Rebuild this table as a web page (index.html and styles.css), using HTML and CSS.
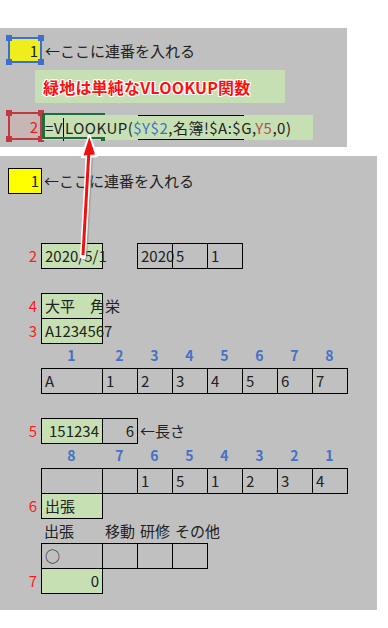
FILE: index.html
```html
<!DOCTYPE html>
<html lang="ja">
<head>
<meta charset="utf-8">
<link rel="stylesheet" href="styles.css">
</head>
<body>
<div class="top">
  <div class="trow r1">
    <div class="sel sel-blue"><span>1</span><i class="h tl"></i><i class="h tr"></i><i class="h bl"></i><i class="h br"></i></div>
    <span class="note">←ここに連番を入れる</span>
  </div>
  <div class="banner">緑地は単純なVLOOKUP関数</div>
  <div class="trow r2">
    <div class="sel sel-red"><span>2</span><i class="h tl"></i><i class="h tr"></i><i class="h bl"></i><i class="h br"></i></div>
    <div class="formula">=V<i class="caret"></i>LOOKUP(<span class="fb">$Y$2</span>,名簿!$A:$G,<span class="fr">Y5</span>,0)<i class="edit"></i><i class="knob"></i><i class="range"></i></div>
  </div>
</div>

<div class="sheet">
  <div class="row">
    <div class="lab"><div class="ycell">1</div></div>
    <span class="note">←ここに連番を入れる</span>
  </div>
  <div class="row"></div>
  <div class="row"></div>
  <div class="row">
    <div class="lab">2</div>
    <div class="c w g r">2020/5/1</div><div class="e"></div>
    <div class="c">2020</div><div class="c">5</div><div class="c">1</div>
  </div>
  <div class="row"></div>
  <div class="row">
    <div class="lab">4</div>
    <div class="c w g">大平　角栄</div>
  </div>
  <div class="row">
    <div class="lab">3</div>
    <div class="c w g">A1234567</div>
  </div>
  <div class="row">
    <div class="lab"></div>
    <div class="hn w">1</div><div class="hn">2</div><div class="hn">3</div><div class="hn">4</div><div class="hn">5</div><div class="hn">6</div><div class="hn">7</div><div class="hn">8</div>
  </div>
  <div class="row">
    <div class="lab"></div>
    <div class="c w">A</div><div class="c">1</div><div class="c">2</div><div class="c">3</div><div class="c">4</div><div class="c">5</div><div class="c">6</div><div class="c">7</div>
  </div>
  <div class="row"></div>
  <div class="row">
    <div class="lab">5</div>
    <div class="c w g r">151234</div><div class="c r">6</div>
    <span class="note">←長さ</span>
  </div>
  <div class="row">
    <div class="lab"></div>
    <div class="hn w">8</div><div class="hn">7</div><div class="hn">6</div><div class="hn">5</div><div class="hn">4</div><div class="hn">3</div><div class="hn">2</div><div class="hn">1</div>
  </div>
  <div class="row">
    <div class="lab"></div>
    <div class="c w"></div><div class="c"></div><div class="c">1</div><div class="c">5</div><div class="c">1</div><div class="c">2</div><div class="c">3</div><div class="c">4</div>
  </div>
  <div class="row">
    <div class="lab">6</div>
    <div class="c w g">出張</div>
  </div>
  <div class="row">
    <div class="lab"></div>
    <div class="t w">出張</div><div class="t">移動</div><div class="t">研修</div><div class="t">その他</div>
  </div>
  <div class="row">
    <div class="lab"></div>
    <div class="c w">○</div><div class="c"></div><div class="c"></div><div class="c"></div>
  </div>
  <div class="row">
    <div class="lab">7</div>
    <div class="c w g r">0</div>
  </div>
</div>

<svg class="arrow" width="388" height="628" viewBox="0 0 388 628">
  <line x1="84.5" y1="257" x2="90.5" y2="152" stroke="#8a8a8a" stroke-width="6" stroke-linecap="round" opacity="0.5"/>
  <line x1="83" y1="256" x2="89" y2="150" stroke="#fff" stroke-width="6" stroke-linecap="round"/>
  <polygon points="89.3,135.5 82,157 96.5,156" fill="#fff" stroke="#fff" stroke-width="2.5" stroke-linejoin="round"/>
  <line x1="83" y1="255" x2="89" y2="150" stroke="#ee1111" stroke-width="3"/>
  <polygon points="89.3,137 83.5,155.5 95,154.5" fill="#ee1111"/>
</svg>
</body>
</html>
```
FILE: styles.css
```css
html, body {
  margin: 0;
  padding: 0;
  background: #fff;
}
body {
  width: 388px;
  height: 628px;
  position: relative;
  font-family: "Noto Sans CJK JP", "Noto Sans", sans-serif;
  font-size: 15px;
  color: #222;
}
.top {
  margin-top: 28px;
  width: 347px;
  height: 119px;
  box-sizing: border-box;
  padding-top: 9px;
  background: #c0c0c0;
}
.trow {
  display: flex;
  align-items: center;
}
.r1 { height: 26px; }
.r2 {
  margin-top: 9px;
  height: 28px;
  align-items: flex-end;
}
.sel {
  position: relative;
  box-sizing: border-box;
  margin-left: 8px;
  width: 34px;
  height: 26px;
  border: 2px solid #3d6fce;
  background: #eeee1e;
  display: flex;
  align-items: center;
  justify-content: flex-end;
  padding-right: 2px;
  line-height: 1;
}
.sel-red {
  height: 28px;
  border-color: #c0393e;
  background: #c8b6b6;
  color: #e02020;
}
.h {
  position: absolute;
  width: 6px;
  height: 6px;
  background: #3d6fce;
}
.sel-red .h { background: #c0393e; }
.tl { top: -4px; left: -4px; }
.tr { top: -4px; right: -4px; }
.bl { bottom: -4px; left: -4px; }
.br { bottom: -4px; right: -4px; }
.note {
  padding-left: 3px;
  white-space: nowrap;
}
.banner {
  margin: 7px 0 0 35px;
  width: 250px;
  height: 33px;
  background: #c6e0b4;
  box-sizing: border-box;
  padding-left: 8px;
  display: flex;
  align-items: center;
  font-weight: bold;
  font-size: 16px;
  letter-spacing: 0.2px;
  color: #ff1010;
  text-shadow: 1px 0 0 #fff, -1px 0 0 #fff, 0 1px 0 #fff, 0 -1px 0 #fff, 1px 1px 0 #fff, -1px -1px 0 #fff, 1px -1px 0 #fff, -1px 1px 0 #fff;
}
.formula {
  position: relative;
  width: 271px;
  height: 25px;
  background: #c6e0b4;
  box-sizing: border-box;
  padding-left: 3px;
  line-height: 25px;
  letter-spacing: 0.5px;
  white-space: nowrap;
}
.fb { color: #4070c4; }
.fr { color: #b8504a; }
.edit {
  position: absolute;
  left: 0;
  top: -2px;
  width: 63px;
  height: 26px;
  box-sizing: border-box;
  border: 2px solid #1f6b3d;
  border-left-width: 3px;
  border-right: none;
}
.knob {
  position: absolute;
  left: 59px;
  top: 22px;
  width: 4px;
  height: 4px;
  background: #1f6b3d;
}
.range {
  position: absolute;
  left: 96px;
  top: 0;
  width: 106px;
  height: 25px;
  box-sizing: border-box;
  border-top: 1px solid #000;
  border-bottom: 1px solid #000;
}
.caret {
  display: inline-block;
  width: 1px;
  height: 23px;
  margin: 0 1px 0 0;
  vertical-align: middle;
  background: #000;
}
.sheet {
  margin-top: 9px;
  width: 377px;
  height: 454px;
  box-sizing: border-box;
  padding-top: 12px;
  background: #c0c0c0;
}
.row {
  display: flex;
  height: 25px;
  align-items: flex-start;
}
.lab {
  width: 41px;
  flex: none;
  height: 25px;
  box-sizing: border-box;
  padding-right: 4px;
  text-align: right;
  line-height: 25px;
  color: #ff1a1a;
}
.row > .note { line-height: 25px; }
.ycell {
  margin-left: 8px;
  width: 34px;
  height: 26px;
  box-sizing: border-box;
  border: 1px solid #000;
  background: #ffff00;
  color: #222;
  line-height: 24px;
  padding-right: 2px;
}
.c {
  flex: none;
  width: 36px;
  height: 26px;
  margin-right: -1px;
  box-sizing: border-box;
  border: 1px solid #000;
  padding: 0 3px;
  line-height: 24px;
  white-space: nowrap;
  overflow: visible;
}
.c.w { width: 62px; }
.g { background: #c6e0b4; }
.r { text-align: right; }
.e {
  flex: none;
  width: 35px;
}
.hn {
  flex: none;
  width: 35px;
  text-align: center;
  line-height: 25px;
  font-weight: bold;
  font-size: 14px;
  color: #4472c4;
}
.hn.w { width: 61px; }
.t {
  flex: none;
  width: 35px;
  padding-left: 3px;
  box-sizing: border-box;
  line-height: 25px;
  white-space: nowrap;
}
.t.w { width: 61px; }
.arrow {
  position: absolute;
  left: 0;
  top: 0;
  pointer-events: none;
}
```
